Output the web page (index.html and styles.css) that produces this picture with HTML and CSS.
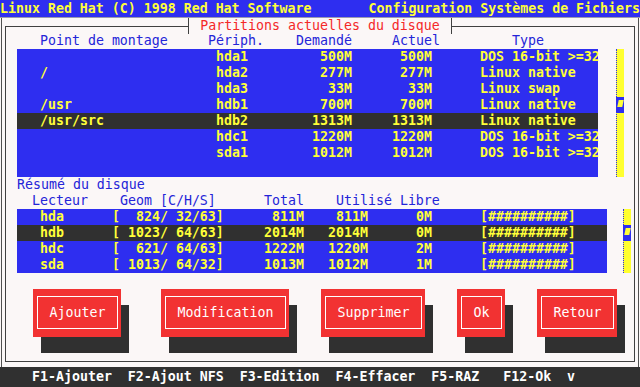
FILE: index.html
```html
<!DOCTYPE html>
<html lang="fr">
<head>
<meta charset="utf-8">
<title>Partitions actuelles du disque</title>
<link rel="stylesheet" href="styles.css">
</head>
<body>
<div class="titlebar">
  <span>Linux Red Hat (C) 1998 Red Hat Software</span>
  <span>Configuration Systèmes de Fichiers</span>
</div>
<div class="screen">
  <div class="tab">Partitions actuelles du disque</div>
  <div class="window">
    <div class="hdr">
      <span>Point de montage</span><span>Périph.</span><span>Demandé</span><span>Actuel</span><span>Type</span>
    </div>
    <div class="listwrap">
      <div class="plist">
        <div class="prow"><span></span><span>hda1</span><span class="r">500M</span><span class="r">500M</span><span class="t">DOS 16-bit &gt;=32</span></div>
        <div class="prow"><span>/</span><span>hda2</span><span class="r">277M</span><span class="r">277M</span><span class="t">Linux native</span></div>
        <div class="prow"><span></span><span>hda3</span><span class="r">33M</span><span class="r">33M</span><span class="t">Linux swap</span></div>
        <div class="prow"><span>/usr</span><span>hdb1</span><span class="r">700M</span><span class="r">700M</span><span class="t">Linux native</span></div>
        <div class="prow sel"><span>/usr/src</span><span>hdb2</span><span class="r">1313M</span><span class="r">1313M</span><span class="t">Linux native</span></div>
        <div class="prow"><span></span><span>hdc1</span><span class="r">1220M</span><span class="r">1220M</span><span class="t">DOS 16-bit &gt;=32</span></div>
        <div class="prow"><span></span><span>sda1</span><span class="r">1012M</span><span class="r">1012M</span><span class="t">DOS 16-bit &gt;=32</span></div>
      </div>
      <div class="sb sb-parts"><div class="thumb"><i></i></div></div>
    </div>
    <div class="sect">Résumé du disque</div>
    <div class="dhdr">
      <span>Lecteur</span><span>Geom [C/H/S]</span><span>Total</span><span>Utilisé Libre</span>
    </div>
    <div class="listwrap disks">
      <div class="dlist">
        <div class="drow"><span>hda</span><span class="geo">[  824/ 32/63]</span><span class="r">811M</span><span class="r">811M</span><span class="r">0M</span><span class="t">[##########]</span></div>
        <div class="drow sel"><span>hdb</span><span class="geo">[ 1023/ 64/63]</span><span class="r">2014M</span><span class="r">2014M</span><span class="r">0M</span><span class="t">[##########]</span></div>
        <div class="drow"><span>hdc</span><span class="geo">[  621/ 64/63]</span><span class="r">1222M</span><span class="r">1220M</span><span class="r">2M</span><span class="t">[##########]</span></div>
        <div class="drow"><span>sda</span><span class="geo">[ 1013/ 64/32]</span><span class="r">1013M</span><span class="r">1012M</span><span class="r">1M</span><span class="t">[##########]</span></div>
      </div>
      <div class="sb sb-disks"><div class="thumb"><i></i></div></div>
    </div>
    <div class="buttons">
      <div class="btn w-ajouter"><span>Ajouter</span></div>
      <div class="btn w-modif"><span>Modification</span></div>
      <div class="btn w-suppr"><span>Supprimer</span></div>
      <div class="btn w-ok"><span>Ok</span></div>
      <div class="btn w-retour"><span>Retour</span></div>
    </div>
  </div>
</div>
<div class="footer">F1-Ajouter  F2-Ajout NFS  F3-Edition  F4-Effacer  F5-RAZ   F12-Ok  v</div>
</body>
</html>
```
FILE: styles.css
```css
* { box-sizing: border-box; }
html, body { margin: 0; padding: 0; }
body {
  width: 640px;
  height: 387px;
  overflow: hidden;
  background: #fbf7f7;
  font-family: "DejaVu Sans Mono", "Liberation Mono", monospace;
  font-size: 13.28px;
  line-height: 16px;
  font-weight: bold;
}
.titlebar {
  height: 18px;
  background: #2e2ef0;
  color: #ffff38;
  display: flex;
  justify-content: space-between;
  border-bottom: 1px solid #9a9ab0;
  line-height: 17px;
  white-space: pre;
}
.screen {
  position: relative;
  height: 349px;
  margin: 0 1px;
  border-left: 1px solid #505050;
  border-right: 1px solid #505050;
  padding: 8px 3px 0;
}
.tab {
  position: absolute;
  left: 186px;
  top: 0;
  width: 264px;
  height: 16px;
  background: #fbf7f7;
  border-left: 1px solid #404040;
  border-right: 1px solid #404040;
  color: #f42828;
  font-weight: normal;
  text-align: center;
  line-height: 15px;
  z-index: 2;
}
.window {
  position: relative;
  height: 336px;
  border: 1px solid #404040;
  padding-top: 6px;
}
.hdr, .dhdr, .sect {
  color: #2424d8;
  font-weight: normal;
  height: 16px;
  white-space: pre;
}
.hdr {
  display: grid;
  grid-template-columns: 168px 88px 96px 120px 1fr;
  padding-left: 34px;
}
.listwrap {
  display: flex;
  margin-left: 11px;
  gap: 18px;
}
.listwrap.disks { gap: 16px; }
.plist, .dlist {
  background: #2e2ef0;
  color: #ffff38;
}
.plist { width: 581px; height: 128px; }
.dlist { width: 590px; height: 64px; }
.prow, .drow {
  display: grid;
  height: 16px;
  white-space: pre;
}
.prow {
  grid-template-columns: 176px 64px 72px 80px 1fr;
  padding-left: 23px;
}
.drow {
  grid-template-columns: 72px 112px 80px 64px 64px 1fr;
  padding-left: 23px;
}
.sel { background: #303030; }
.r { text-align: right; }
.t { padding-left: 48px; }
.sb {
  width: 8px;
  background: #ffff30;
  border-left: 1px dotted #2e2ef0;
}
.sb-parts { height: 128px; padding-top: 48px; }
.sb-disks { height: 64px; padding-top: 16px; }
.thumb {
  width: 8px;
  height: 16px;
  margin-left: -1px;
  background: #2e2ef0;
  padding: 3px 1px 0 2px;
}
.thumb i {
  display: block;
  width: 5px;
  height: 7px;
  background: #ffff38;
  transform: skewX(-12deg);
}
.sect { padding-left: 11px; }
.dhdr {
  display: grid;
  grid-template-columns: 88px 144px 72px 1fr;
  padding-left: 26px;
}
.buttons {
  display: flex;
  gap: 32px;
  margin-top: 16px;
  padding-left: 27px;
}
.btn {
  height: 48px;
  background: #f23232;
  box-shadow: 8px 16px 0 #303030;
  padding: 7px 3px 8px 4px;
  color: #ffffff;
  font-weight: normal;
}
.btn span {
  display: flex;
  height: 33px;
  border: 1px solid #ffffff;
  align-items: center;
  justify-content: center;
}
.w-ajouter { width: 88px; margin-right: 8px; }
.w-modif { width: 128px; }
.w-suppr { width: 104px; }
.w-ok { width: 48px; }
.w-retour { width: 80px; }
.footer {
  height: 20px;
  background: #303030;
  color: #ffffff;
  white-space: pre;
  line-height: 20px;
  padding-left: 32px;
}
```
